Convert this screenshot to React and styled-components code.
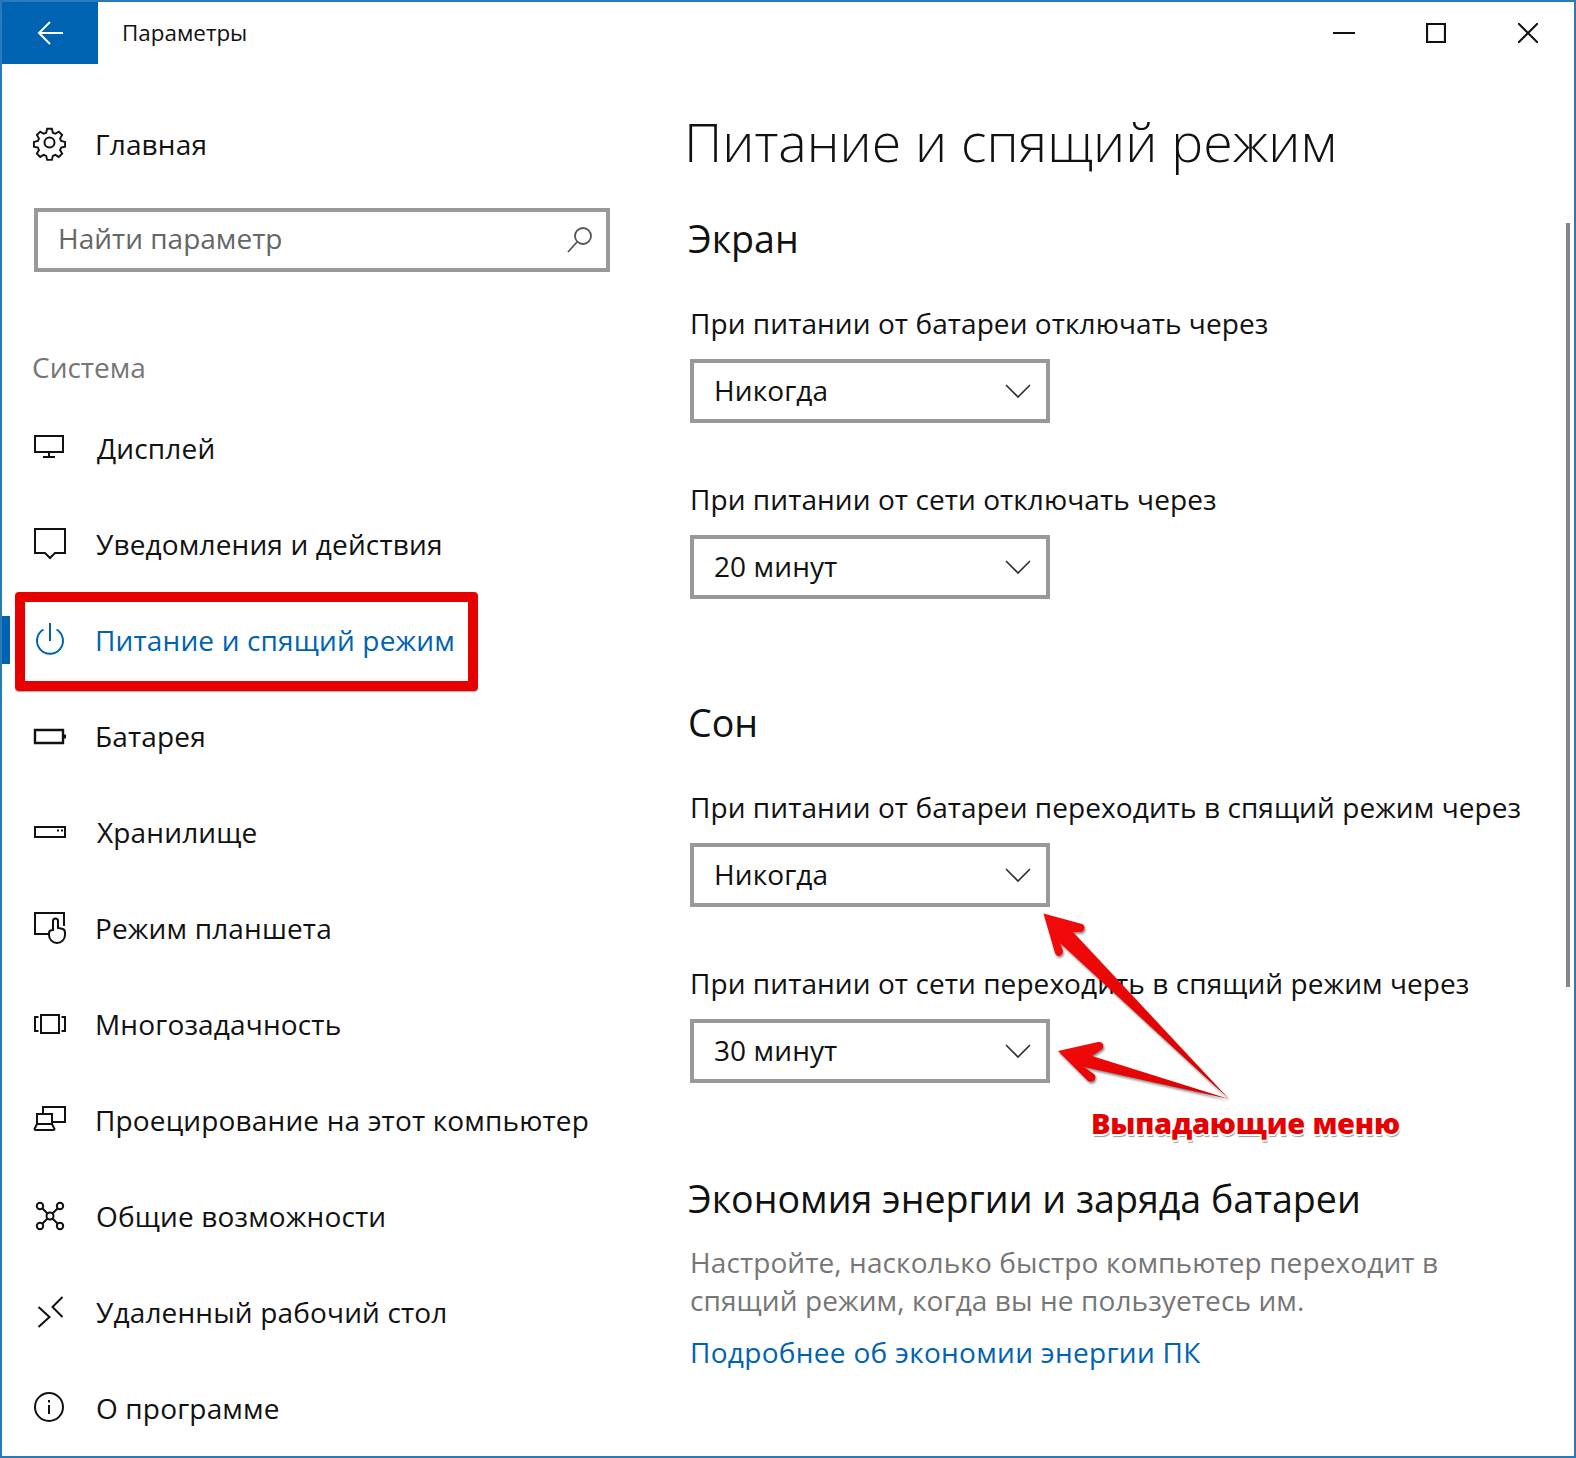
import React from 'react';
import styled, { createGlobalStyle } from 'styled-components';

const Global = createGlobalStyle`
  html, body { margin: 0; padding: 0; background: #fff; }
  body { font-family: "Open Sans", "Noto Sans", "Liberation Sans", sans-serif; color: #000; }
  * { box-sizing: border-box; }
`;

const Window = styled.div`
  position: relative; width: 1576px; height: 1458px; border: 2px solid #2a7ab8; background: #fff; overflow: hidden;
`;
const TitleBar = styled.header`
  display: flex; align-items: center; height: 62px;
`;
const BackButton = styled.div`
  width: 96px; height: 62px; background: #0063b1; display: flex; align-items: center; justify-content: center;
`;
const AppTitle = styled.div`
  margin-left: 24px; font-size: 22.4px; line-height: 62px; color: #111; flex: 1;
`;
const WindowControls = styled.div`
  display: flex; width: 276px; height: 62px;
`;
const ControlButton = styled.div`
  width: 92px; height: 62px; display: flex; align-items: center; justify-content: center;
`;
const Body = styled.div`
  display: flex; align-items: flex-start;
`;
const Sidebar = styled.nav`
  width: 688px; flex: none; padding-top: 47px;
`;
const NavRow = styled.div`
  display: flex; align-items: center; height: ${p => p.$h || 96}px; padding-left: 32px; gap: ${p => 29 + (p.$nudge || 0)}px;
  font-size: 28px; letter-spacing: .15px; color: ${p => p.$active ? '#0063b1' : '#111'}; white-space: nowrap;
`;
const IconBox = styled.span`
  width: 32px; height: 36px; flex: none; display: flex; align-items: center; justify-content: center;
  margin-top: ${p => p.$shift}px;
`;
const SearchBox = styled.div`
  margin: 31px 0 0 32px; width: 576px; height: 64px; border: 4px solid #999; display: flex; align-items: center;
  justify-content: space-between; padding: 0 12px 4px 20px; font-size: 28px; color: #666;
`;
const SearchIcon = styled.svg`
  margin-top: 4px;
`;
const GroupLabel = styled.div`
  margin: 73px 0 0 30px; font-size: 28px; line-height: 44px; color: #767676; height: 55px;
`;
const Content = styled.main`
  flex: 1; letter-spacing: .1px;
`;
const PageTitle = styled.h1`
  margin: 43px 0 0 -6px; font-size: 53.6px; line-height: 70px; font-weight: 300; color: #111; white-space: nowrap; letter-spacing: 0;
`;
const SectionTitle = styled.h2`
  margin: ${p => p.$mt}px 0 -2px -2px; font-size: 37.6px; line-height: 52px; font-weight: 400; color: #111; white-space: nowrap; letter-spacing: 0;
`;
const FieldLabel = styled.div`
  margin-top: ${p => p.$mt}px; font-size: 28px; line-height: 40px; color: #111; white-space: nowrap; letter-spacing: .07px;
`;
const Dropdown = styled.div`
  margin-top: 16px; width: 360px; height: 64px; border: 4px solid #999; display: flex; align-items: center;
  justify-content: space-between; padding: 0 15px 3px 20px; font-size: 28px; color: #111;
`;
const ChevronIcon = styled.svg`
  margin-top: 3px;
`;
const HelpText = styled.p`
  margin: 20px 0 0; font-size: 28px; line-height: 38px; color: #767676; white-space: nowrap;
`;
const HelpLink = styled.div`
  margin-top: 14px; font-size: 28px; line-height: 38px; color: #0063b1; white-space: nowrap; letter-spacing: .3px;
`;
const Scrollbar = styled.div`
  position: absolute; right: 4px; top: 221px; width: 4px; height: 764px; background: #868686;
`;
const ActiveBar = styled.div`
  position: absolute; left: 0; top: 614px; width: 8px; height: 48px; background: #0063b1;
`;
const Highlight = styled.div`
  position: absolute; left: 13px; top: 590px; width: 463px; height: 99px; border: 10px solid #e60000; border-radius: 4px;
  box-shadow: 0 1px 1px rgba(0,0,0,.35);
`;
const Arrows = styled.svg`
  position: absolute; left: 1030px; top: 900px; filter: drop-shadow(1px 2px 1px rgba(0,0,0,.45));
`;
const Callout = styled.div`
  position: absolute; left: 1089px; top: 1101px; font-size: 29px; line-height: 40px; font-weight: 800; letter-spacing: -.2px; color: #e60000; white-space: nowrap;
  text-shadow: -1px -1px 0 #fff, 1px -1px 0 #fff, -1px 1px 0 #fff, 1px 1px 0 #fff, 0 -2px 0 #fff, -2px 0 0 #fff, 2px 0 0 #fff, 0 2px 0 #fff, 1px 3px 1px #999;
`;

const Ico = ({ children, w = 32, h = 36, c = '#111', sw = 2 }) => (
  <svg width={w} height={h} viewBox={`0 0 ${w} ${h}`} fill="none" stroke={c} strokeWidth={sw} overflow="visible">{children}</svg>
);

const Gear = () => (
  <Ico>
    <circle cx="15.500" cy="16.500" r="5" />
    <path d="M13.500 3.500h5l1 4.200 2.600 1.100 3.700-2.200 3.500 3.500-2.200 3.700 1.100 2.600 4.200 1v5l-4.200 1-1.100 2.600 2.200 3.700-3.500 3.500-3.700-2.200-2.600 1.100-1 4.200h-5l-1-4.200-2.600-1.100-3.700 2.200-3.500-3.500 2.200-3.700-1.100-2.600-4.200-1v-5l4.200-1 1.100-2.600-2.200-3.700 3.500-3.500 3.700 2.200 2.600-1.100z" transform="translate(15.500 16.500) scale(.95) translate(-16 -18)" />
  </Ico>
);
const Display = () => <Ico><path d="M1 4h28v16H1zM15 20v5M9 25h12" /></Ico>;
const Bell = () => <Ico><path d="M1 1h30v24H21l-5 5-5-5H1z" /></Ico>;
const Power = () => <Ico c="#0063b1"><path d="M16 -1v18" /><path d="M9.500 5.500a13 13 0 1 0 13 0" /></Ico>;
const Battery = () => <Ico><path d="M1 10h28v13H1z" strokeWidth="2.400" /><path d="M30.500 14.500v4" strokeWidth="3" /></Ico>;
const Storage = () => <Ico><path d="M1 11h30v10H1z" /><path d="M23 14.500h2M27 14.500h2" /></Ico>;
const Tablet = () => <Ico><path d="M14 22H1V1h29v13" /><path d="M19 18V9a2.500 2.500 0 0 1 5 0v7l4 .8c2 .4 3 1.500 3 3.700V23a8 8 0 0 1-16 0v-2c0-1.500 1.500-3 4-3z" fill="#fff" /></Ico>;
const Multi = () => <Ico><path d="M4.500 9H1v14h3.500M27.500 9H31v14h-3.500" /><path d="M7 7h18v18H7z" /></Ico>;
const Project = () => <Ico><path d="M9 9V3h22v15H19" /><path d="M3 10h15v10H3zM0.500 25l2.500-5h15l2.500 5c0 .5-.5 1-1 1H1.500c-.5 0-1-.5-1-1z" /></Ico>;
const Access = () => (
  <Ico>
    <circle cx="16" cy="16" r="3.500" /><circle cx="6" cy="6" r="3.200" /><circle cx="26" cy="6" r="3.200" /><circle cx="6" cy="26" r="3.200" /><circle cx="26" cy="26" r="3.200" />
    <path d="M8.500 8.500l5 5M23.500 8.500l-5 5M8.500 23.500l5-5M23.500 23.500l-5-5" />
  </Ico>
);
const Remote = () => <Ico><path d="M4.500 11l11 10-11 10M28.500 1l-10 10 10 10" /></Ico>;
const Info = () => <Ico><circle cx="15" cy="15" r="14" /><path d="M15 13v9M15 8v2.500" /></Ico>;

const Chevron = () => (
  <ChevronIcon width="26" height="16" viewBox="0 0 26 16" fill="none" stroke="#333" strokeWidth="1.700"><path d="M1 2l12 12L25 2" /></ChevronIcon>
);

const nav = [
  ['Дисплей', Display, 0, 2], ['Уведомления и действия', Bell, 0, 1], ['Питание и спящий режим', Power, true, 0],
  ['Батарея', Battery, 0, 0], ['Хранилище', Storage, 0, 2], ['Режим планшета', Tablet, 0, 0], ['Многозадачность', Multi, 0, 0],
  ['Проецирование на этот компьютер', Project, 0, 0], ['Общие возможности', Access, 0, 1], ['Удаленный рабочий стол', Remote, 0, 1], ['О программе', Info, 0, 1],
];

export default function App() {
  return (
    <>
      <Global />
      <Window>
        <TitleBar>
          <BackButton>
            <svg width="26" height="24" viewBox="0 0 26 24" fill="none" stroke="#fff" strokeWidth="2"><path d="M13 1L2 12l11 11M2 12h24" /></svg>
          </BackButton>
          <AppTitle>Параметры</AppTitle>
          <WindowControls>
            <ControlButton><svg width="22" height="4" viewBox="0 0 22 4" stroke="#111" strokeWidth="2"><path d="M0 2h22" /></svg></ControlButton>
            <ControlButton><svg width="20" height="20" viewBox="0 0 20 20" fill="none" stroke="#111" strokeWidth="2.200"><path d="M1 1h18v18H1z" /></svg></ControlButton>
            <ControlButton><svg width="20" height="20" viewBox="0 0 20 20" fill="none" stroke="#111" strokeWidth="2"><path d="M0 0l20 20M20 0L0 20" /></svg></ControlButton>
          </WindowControls>
        </TitleBar>
        <Body>
          <Sidebar>
            <NavRow $h={66}><IconBox $shift={0}><Gear /></IconBox>Главная</NavRow>
            <SearchBox>
              Найти параметр
              <SearchIcon width="28" height="28" viewBox="0 0 28 28" fill="none" stroke="#555" strokeWidth="1.800"><circle cx="17" cy="10" r="8" /><path d="M11 16L2 26" /></SearchIcon>
            </SearchBox>
            <GroupLabel>Система</GroupLabel>
            {nav.map(([label, I, active, nudge]) => (
              <NavRow key={label} $active={active} $nudge={nudge}><IconBox $shift={4}><I /></IconBox>{label}</NavRow>
            ))}
          </Sidebar>
          <Content>
            <PageTitle>Питание и спящий режим</PageTitle>
            <SectionTitle $mt={36}>Экран</SectionTitle>
            <FieldLabel $mt={40}>При питании от батареи отключать через</FieldLabel>
            <Dropdown>Никогда<Chevron /></Dropdown>
            <FieldLabel $mt={56}>При питании от сети отключать через</FieldLabel>
            <Dropdown>20 минут<Chevron /></Dropdown>
            <SectionTitle $mt={98}>Сон</SectionTitle>
            <FieldLabel $mt={40}>При питании от батареи переходить в спящий режим через</FieldLabel>
            <Dropdown>Никогда<Chevron /></Dropdown>
            <FieldLabel $mt={56}>При питании от сети переходить в спящий режим через</FieldLabel>
            <Dropdown>30 минут<Chevron /></Dropdown>
            <SectionTitle $mt={90}>Экономия энергии и заряда батареи</SectionTitle>
            <HelpText>Настройте, насколько быстро компьютер переходит в<br />спящий режим, когда вы не пользуетесь им.</HelpText>
            <HelpLink>Подробнее об экономии энергии ПК</HelpLink>
          </Content>
        </Body>
        <Scrollbar />
        <ActiveBar />
        <Highlight />
        <Arrows width="210" height="210" viewBox="0 0 210 210">
          <defs>
            <linearGradient id="ag" x1="0" y1="0" x2="1" y2="1"><stop offset="0" stopColor="#f50a0a" /><stop offset="1" stopColor="#d80000" /></linearGradient>
          </defs>
          <path fill="url(#ag)" d="M11.500 11.500L50 22c4 1.500 3 8-2 8H41L197 197 28 41l3 8c0 5-6 7-8 2z" />
          <path fill="url(#ag)" d="M26 149L66 140c6-1 7 6 3 8l-9 6L197 197 52 165l10 7c4 4-1 10-6 7z" />
        </Arrows>
        <Callout>Выпадающие меню</Callout>
      </Window>
    </>
  );
}
